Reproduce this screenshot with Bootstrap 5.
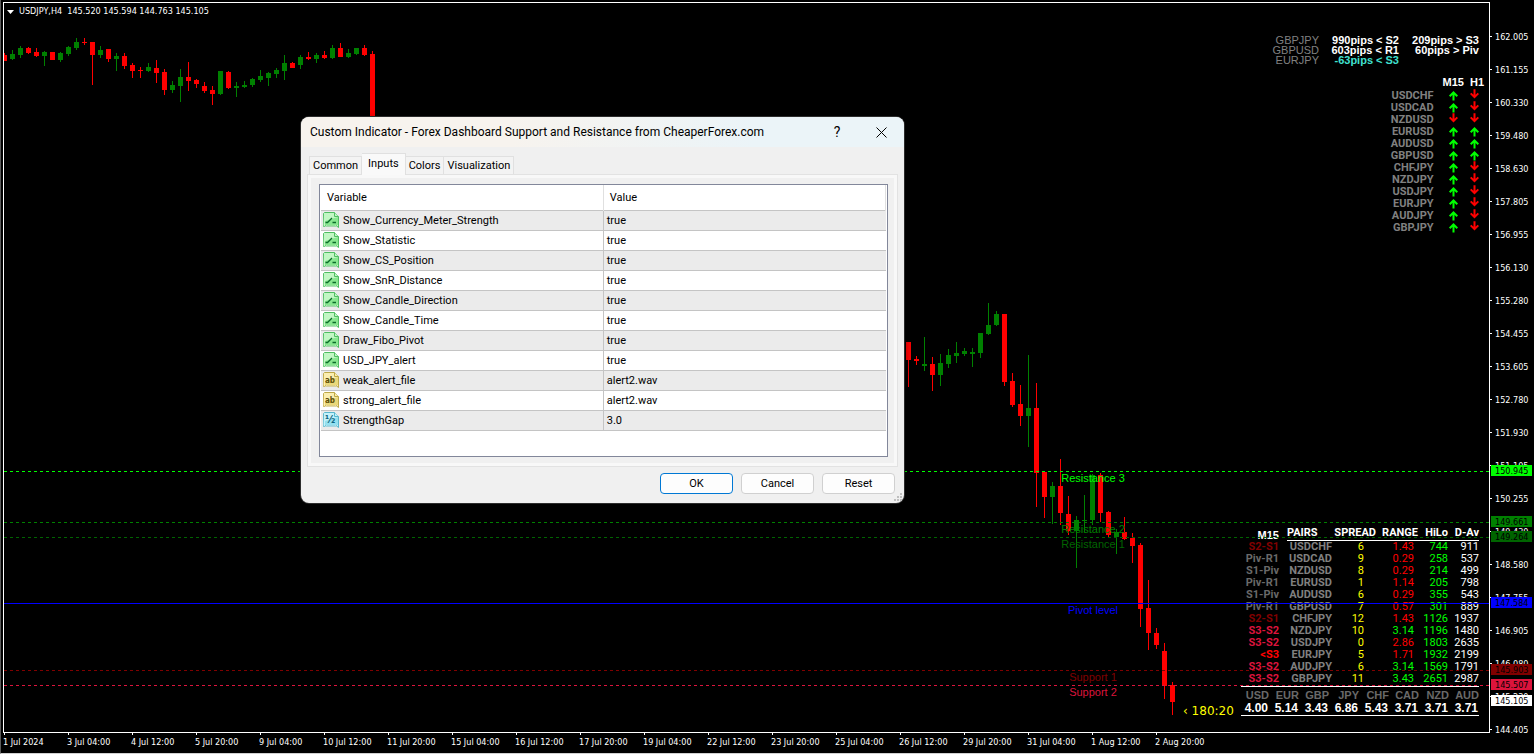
<!DOCTYPE html>
<html lang="en">
<head>
<meta charset="utf-8">
<meta name="viewport" content="width=device-width, initial-scale=1">
<title>USDJPY,H4</title>
<link href="https://cdn.jsdelivr.net/npm/bootstrap@5.3.0/dist/css/bootstrap.min.css" rel="stylesheet">
<style>
  :root { --ui: Roboto, "Liberation Sans", sans-serif; --scale: "DejaVu Sans Condensed", "DejaVu Sans", sans-serif; --arial: "Liberation Sans", Arial, sans-serif; }
  body { background: #000; color: #fff; font: 11px/12px var(--arial); border-left: 1px solid #5a5a5a; border-bottom: 1px solid #d0d0d0; }
  .plot { margin: 2px 0 0 2px; border: 1px solid #fff; min-width: 0; }
  .symbol-line { left: 3px; top: 2px; gap: 5px; font: 9px/13px var(--scale); }
  .scale-font { font: 9px/12px var(--scale); }
  table { border-collapse: collapse; }
  table td, table th { padding: 0; white-space: nowrap; }

  /* price and time scales */
  .price-axis { width: 44px; padding-top: 20px; }
  .price-row { height: 33px; }
  .price-row::before { content: ""; width: 2px; height: 1px; background: #fff; margin-right: 3px; }
  .price-tag { left: 1px; right: 2px; height: 11px; padding-left: 4px; color: #000; }
  .time-axis { height: 20px; padding-left: 3px; }
  .time-cell { flex: 0 0 64px; white-space: nowrap; }
  .time-cell::before { content: ""; display: block; width: 1px; height: 2px; margin-bottom: 1px; background: #fff; }
  .time-cell span { margin-left: -1px; }

  /* on-chart tables */
  .snr { right: 10px; top: 32px; line-height: 10px; color: #808080; }
  .snr td, .snr th { width: 80px; height: 10px; text-align: right; font-weight: 400; }
  .snr td { font-weight: 700; color: #fff; }
  .snr .near td { color: #40e0d0; }
  .trend { right: 5px; top: 73px; }
  .trend th, .trend td { height: 12px; width: 20px; text-align: center; }
  .trend thead th { height: 14px; vertical-align: top; }
  .trend tbody th { width: 60px; padding-right: 9px; text-align: right; font: bold 11px/12px var(--ui); color: #808080; }
  .trend svg { display: block; margin: 0 auto; overflow: visible; }
  .stats { right: 10px; bottom: 16px; width: 238px; }
  .pairs { table-layout: fixed; width: 100%; font-family: var(--ui); }
  .pairs td, .pairs th { height: 12px; text-align: right; }
  .pairs thead th { height: 14px; line-height: 11px; vertical-align: top; border-bottom: 1px solid #fff; }
  .pairs thead th:first-child { border: 0; font-family: var(--arial); vertical-align: bottom; }
  .pairs thead th:nth-child(2) { text-align: left; }
  .pairs th:first-child, .pairs td:first-child { padding-right: 8px; font-weight: 700; }
  .pairs tbody th { color: #808080; }
  .pairs td:nth-child(3) { padding-right: 12px; color: #ff0; }
  .pairs td:nth-child(4) { padding-right: 4px; }
  .up { color: #0f0; } .down { color: #f00; } .muted-zone { color: #696969; } .s1zone { color: #800000; } .s2zone { color: #dc143c; }
  .meter { table-layout: fixed; width: 100%; margin-top: 1px; border: solid #fff; border-width: 1px 0; font-weight: 700; }
  .meter th { height: 15px; color: #696969; text-align: right; }
  .meter th:first-child { width: 28px; }
  .meter td { height: 14px; padding-right: 1px; text-align: right; font-size: 12px; line-height: 12px; vertical-align: top; }

  /* indicator window */
  .dialog { left: 301px; top: 117px; width: 603px; max-width: calc(100vw - 302px); border-radius: 8px; background: #f0f0f0; color: #000; font: 11px/14px var(--ui); box-shadow: 0 0 0 1px #2c2c2c, 0 3px 10px rgba(0,0,0,.5); overflow: hidden; }
  .titlebar { height: 30px; padding: 0 9px; font-size: 12px; background: linear-gradient(90deg, #f7f3ee 35%, #ebf4f8 75%); }
  .titlebar h1 { font: inherit; margin: 0; }
  .titlebar button { width: 28px; height: 28px; padding: 0; border: 0; background: none; color: #000; font: 14px/28px var(--ui); }
  .titlebar svg { display: block; margin: 0 auto; }
  .tab-strip { padding: 6px 8px 0; border: 0; align-items: flex-end; }
  .tab-strip .nav-link { margin: 0; height: 18px; padding: 2px 3px 1px; border: 1px solid #e0e0e0; border-bottom: 0; border-left-width: 0; border-radius: 0; background: #f3f3f3; color: #000; }
  .tab-strip li:first-child .nav-link { border-left-width: 1px; }
  .tab-strip .nav-link.active { height: 22px; padding: 3px 6px 0; background: #f9f9f9; border-color: #e0e0e0; color: #000; margin-bottom: -1px; position: relative; }
  .tab-panel { margin: 0 6px; border: 1px solid #e2e2e2; background: #f0f0f0; padding: 9px; outline: 3px solid #f8f8f8; outline-offset: -4px; }
  .list-view { border: 1px solid #82879a; background: #fff; min-height: 273px; margin: 0 0 0 2px; padding: 0 1px; }
  .inputs { width: 100%; table-layout: fixed; }
  .inputs thead th { height: 25px; font-weight: 400; padding: 2px 0 0 6px; border-right: 1px solid #e0e0e0; }
  .inputs tbody td { height: 20px; padding-left: 3px; line-height: 16px; border: 1px solid #c4c4c4; border-width: 1px 0; }
  .inputs tbody td:first-child { padding-left: 2px; border-right-width: 1px; }
  .inputs tbody tr:nth-child(odd) td { background: #ebebeb; }
  .inputs tbody span { padding-top: 1px; }
  .actions { gap: 8px; padding: 6px 9px 9px; }
  .actions .btn { width: 73px; height: 21px; padding: 0; font: 11px/20px var(--ui); color: #000; background: #fdfdfd; border: 1px solid #d0d0d0; border-radius: 4px; }
  .actions .btn.default { border-color: #0078d4; }
  .grip { right: 2px; bottom: 2px; }
</style>
</head>
<body class="d-flex flex-column vh-100 overflow-hidden">

<main class="d-flex flex-fill" style="min-height:0">
  <section class="plot position-relative flex-fill overflow-hidden" aria-label="USDJPY H4 chart">
    <svg id="candles" class="position-absolute top-0 start-0 w-100 h-100" shape-rendering="crispEdges" aria-hidden="true"></svg>

    <div class="symbol-line position-absolute d-flex align-items-center">
      <svg width="7" height="4" viewBox="0 0 7 4"><path d="M0 0h7L3.500 4z" fill="#fff"/></svg>
      <span>USDJPY,H4&nbsp; 145.520 145.594 144.763 145.105</span>
    </div>

    <table class="snr position-absolute">
      <tr><th scope="row">GBPJPY</th><td>990pips &lt; S2</td><td>209pips &gt; S3</td></tr>
      <tr><th scope="row">GBPUSD</th><td>603pips &lt; R1</td><td>60pips &gt; Piv</td></tr>
      <tr class="near"><th scope="row">EURJPY</th><td>-63pips &lt; S3</td><td></td></tr>
    </table>

    <table class="trend position-absolute">
      <thead><tr><td></td><th>M15</th><th class="text-end">H1</th></tr></thead>
      <tbody id="trend"></tbody>
    </table>

    <div class="stats position-absolute">
      <table class="pairs">
        <colgroup><col style="width:46px"><col style="width:45px"><col style="width:44px"><col style="width:42px"><col style="width:30px"><col style="width:31px"></colgroup>
        <thead><tr><th>M15</th><th>PAIRS</th><th>SPREAD</th><th>RANGE</th><th>HiLo</th><th>D-Av</th></tr></thead>
        <tbody id="pairs"></tbody>
      </table>
      <table class="meter">
        <tr><th>USD</th><th>EUR</th><th>GBP</th><th>JPY</th><th>CHF</th><th>CAD</th><th>NZD</th><th>AUD</th></tr>
        <tr><td>4.00</td><td>5.14</td><td>3.43</td><td>6.86</td><td>5.43</td><td>3.71</td><td>3.71</td><td>3.71</td></tr>
      </table>
    </div>

    <svg id="levels" class="position-absolute top-0 start-0 w-100 h-100 pe-none"></svg>
  </section>

  <aside class="price-axis position-relative scale-font" id="prices" aria-label="Price scale"></aside>
</main>
<footer class="time-axis d-flex scale-font" id="times"></footer>

<div class="dialog position-absolute" role="dialog" aria-labelledby="dlgTitle">
  <div class="titlebar d-flex align-items-center">
    <h1 id="dlgTitle" class="me-auto">Custom Indicator - Forex Dashboard Support and Resistance from CheaperForex.com</h1>
    <button type="button" aria-label="Help" class="me-3">?</button>
    <button type="button" aria-label="Close"><svg width="11" height="11" viewBox="0 0 11 11"><path d="M.5.5l10 10M10.500.500l-10 10" stroke="#000" fill="none"/></svg></button>
  </div>
  <ul class="tab-strip nav nav-tabs">
    <li><a class="nav-link" href="#">Common</a></li>
    <li><a class="nav-link active" href="#" aria-current="page">Inputs</a></li>
    <li><a class="nav-link" href="#">Colors</a></li>
    <li><a class="nav-link" href="#">Visualization</a></li>
  </ul>
  <div class="tab-panel">
    <div class="list-view">
      <table class="inputs">
        <colgroup><col><col style="width:50%"></colgroup>
        <thead><tr><th>Variable</th><th>Value</th></tr></thead>
        <tbody id="inputs"></tbody>
      </table>
    </div>
  </div>
  <div class="actions d-flex justify-content-end">
    <button type="button" class="btn default">OK</button>
    <button type="button" class="btn">Cancel</button>
    <button type="button" class="btn">Reset</button>
  </div>
  <svg class="grip position-absolute" width="8" height="8" viewBox="0 0 8 8" fill="#bfbfbf"><path d="M6 0h2v2H6zM3 3h2v2H3zM6 3h2v2H6zM0 6h2v2H0zM3 6h2v2H3zM6 6h2v2H6z"/></svg>
</div>

<script src="https://cdn.jsdelivr.net/npm/bootstrap@5.3.0/dist/js/bootstrap.bundle.min.js"></script>
<script>
const $ = id => document.getElementById(id);

// candles: high, body top, body bottom, low, colour; one run per visible stretch of bars
const runs = [
  [0, `53 55 61 61 r|50 54 59 60 g|46 48 55 58 g|47 48 53 54 r|48 52 56 57 r|51 52 56 66 g|52 52 60 60 r|52 53 60 62 g|46 47 54 56 g|38 42 48 50 g|38 42 43 45 r|42 42 55 85 r|46 50 55 58 g|49 49 59 62 r|53 56 59 71 g|53 56 66 69 r|63 65 71 78 r|67 70 71 78 r|63 67 71 72 g|60 68 73 83 r|69 72 90 95 r|81 85 90 93 g|69 77 86 102 g|62 77 81 91 r|79 80 84 88 r|82 86 91 93 r|86 90 94 105 r|71 71 94 95 g|71 72 88 89 r|82 86 88 97 g|81 85 87 88 g|78 79 85 87 g|70 76 80 82 g|72 73 78 86 g|68 70 74 78 g|55 63 71 80 g|62 63 68 68 r|55 57 65 69 g|52 57 59 60 r|53 55 59 63 g|51 55 58 59 r|45 48 58 59 g|43 48 57 57 r|49 53 57 58 g|48 48 54 55 g|45 48 55 56 r|51 54 140 140 r`],
  [113, `342 342 360 387 r|356 359 361 365 r|337 364 366 371 g|357 364 375 391 r|354 363 375 386 g|349 355 364 368 g|342 353 356 363 g|348 351 354 356 g|348 352 354 367 g|333 333 353 358 g|303 325 334 335 g|311 314 325 326 g|314 314 382 386 r|373 381 405 407 r|385 404 416 426 r|355 408 416 447 g|383 408 473 507 r|472 472 497 518 r|482 486 497 524 g|459 486 513 525 r|496 514 531 535 r|516 520 531 568 g|495 520 521 532 g|474 475 520 525 g|473 475 513 522 r|511 512 535 537 r|529 532 537 554 g|517 532 539 540 r|533 538 546 563 r|543 545 609 627 r|580 608 633 650 r|628 633 645 649 r|643 651 686 699 r|682 685 702 715 r`]
];
const ORIGIN_X = 4, ORIGIN_Y = 3, STEP = 8;
let shapes = '';
for (const [first, text] of runs) text.split('|').forEach((bar, n) => {
  const [hi, top, bot, lo, c] = bar.split(' '), x = 2 + STEP * (first + n), fill = c === 'r' ? '#f00' : '#008000';
  shapes += `<rect x="${x + 2}" y="${hi}" width="1" height="${lo - hi}" fill="${fill}"/><rect x="${x}" y="${top}" width="5" height="${bot - top}" fill="${fill}"/>`;
});
$('candles').innerHTML = `<g transform="translate(${-ORIGIN_X} ${-ORIGIN_Y})">${shapes}</g>`;

// price scale
const prices = '162.005 161.155 160.330 159.480 158.630 157.805 156.955 156.130 155.280 154.455 153.605 152.780 151.930 151.105 150.255 149.430 148.580 147.755 146.905 146.080 145.230 144.405'.split(' ');
const yOf = p => Math.floor(36 + (162.005 - p) * (33 * 21) / (162.005 - 144.405));
const levels = [
  ['150.945', '#0f0', 'Resistance 3', '#0f0'], ['149.661', '#008000', 'Resistance 2', '#008000'], ['149.264', '#006400', 'Resistance 1', '#006400'],
  ['147.584', '#00f', 'Pivot level', '#00f'], ['145.903', '#800000', 'Support 1', '#800000'], ['145.507', '#dc143c', 'Support 2', '#dc143c'], ['145.105', '#fff']
];
$('prices').innerHTML = prices.map(p => `<div class="price-row d-flex align-items-center">${p}</div>`).join('') +
  levels.map(([p, c]) => `<div class="price-tag position-absolute" style="top:${yOf(p) - 6}px;background:${c}">${p}</div>`).join('');
$('levels').innerHTML = levels.filter(l => l[2]).map(([p, c, name, ink]) => {
  const y = yOf(p) - ORIGIN_Y;
  return `<line x1="0" x2="100%" y1="${y + .5}" y2="${y + .5}" stroke="${c}" ${c === '#00f' ? '' : 'stroke-dasharray="3 3"'} shape-rendering="crispEdges"/><text x="1089" y="${y + 11}" text-anchor="middle" fill="${ink}">${name}</text>`;
}).join('') + `<text x="1179" y="712" fill="#ff0" font-family="DejaVu Sans, sans-serif" font-size="12">‹ 180:20</text>`;

$('times').innerHTML = '1 Jul 2024,3 Jul 04:00,4 Jul 12:00,5 Jul 20:00,9 Jul 04:00,10 Jul 12:00,11 Jul 20:00,15 Jul 04:00,16 Jul 12:00,17 Jul 20:00,19 Jul 04:00,22 Jul 12:00,23 Jul 20:00,25 Jul 04:00,26 Jul 12:00,29 Jul 20:00,31 Jul 04:00,1 Aug 12:00,2 Aug 20:00'
  .split(',').map(t => `<div class="time-cell"><span>${t}</span></div>`).join('');

// candle direction per pair
const arrow = d => d === 'u'
  ? '<svg width="9" height="12" viewBox="0 0 9 12"><path d="M4.500 10.500V3M.7 6.300L4.500 2.500l3.800 3.800" fill="none" stroke="#0f0" stroke-width="2"/></svg>'
  : '<svg width="9" height="12" viewBox="0 0 9 12"><path d="M4.500-.8V7M.7 3.400l3.800 3.800 3.800-3.800" fill="none" stroke="#f00" stroke-width="2"/></svg>';
$('trend').innerHTML = 'USDCHF ud,USDCAD ud,NZDUSD dd,EURUSD uu,AUDUSD uu,GBPUSD uu,CHFJPY ud,NZDJPY ud,USDJPY ud,EURJPY ud,AUDJPY ud,GBPJPY ud'.split(',')
  .map(r => { const [p, d] = r.split(' '); return `<tr><th scope="row">${p}</th><td>${arrow(d[0])}</td><td>${arrow(d[1])}</td></tr>`; }).join('');

const zone = z => z === 'S2-S1' ? 's1zone' : z === 'S3-S2' ? 's2zone' : z === '&lt;S3' ? 'down' : 'muted-zone';
$('pairs').innerHTML = `S2-S1 USDCHF 6 1.43 744 911,Piv-R1 USDCAD 9 0.29 258 537,S1-Piv NZDUSD 8 0.29 214 499,Piv-R1 EURUSD 1 1.14 205 798,S1-Piv AUDUSD 6 0.29 355 543,Piv-R1 GBPUSD 7 0.57 301 889,S2-S1 CHFJPY 12 1.43 1126 1937,S3-S2 NZDJPY 10 3.14 1196 1480,S3-S2 USDJPY 0 2.86 1803 2635,&lt;S3 EURJPY 5 1.71 1932 2199,S3-S2 AUDJPY 6 3.14 1569 1791,S3-S2 GBPJPY 11 3.43 2651 2987`
  .split(',').map(r => { const [z, p, s, g, h, a] = r.split(' ');
    return `<tr><td class="${zone(z)}">${z}</td><th scope="row">${p}</th><td>${s}</td><td class="${g > 3 ? 'up' : 'down'}">${g}</td><td class="up">${h}</td><td>${a}</td></tr>`; }).join('');

// indicator inputs; the icon tells the type
const kinds = {
  bool: ['#c2f7c4', '#5fdc6c', '#4fbd62', '<path d="M2.500 10.500h2L9 6M9.500 10.500h3.500" stroke="#0b6b2a" stroke-width="1.300" fill="none"/>'],
  text: ['#fbeeb0', '#e0c956', '#bda848', '<text x="2" y="11" font-family="DejaVu Sans Condensed" font-weight="700" font-size="8" fill="#5e5008">ab</text>'],
  real: ['#c4f2fa', '#74d3e8', '#58b7cd', '<text x="2" y="11" font-family="DejaVu Sans Condensed" font-weight="700" font-size="11" fill="#0d6580">½</text>']
};
const icon = k => { const [a, b, line, mark] = kinds[k];
  return `<svg class="me-1 flex-shrink-0" width="16" height="16" viewBox="0 0 16 16" aria-hidden="true"><path d="M.5 1.500l1-1h10l4 4v11l-2.500-2-1 1-1-1-1 1-1-1-1 1-1-1-1 1-1-1-1 1-1-1-1.500 1-1.500-.5z" fill="${a}" stroke="${line}"/><path d="M2 9l13-4v8H2z" fill="${b}" opacity=".6"/><path d="M11.500.5v4h4" fill="${a}" stroke="${line}"/>${mark}</svg>`; };
$('inputs').innerHTML = [
  ['bool', 'Show_Currency_Meter_Strength', 'true'], ['bool', 'Show_Statistic', 'true'], ['bool', 'Show_CS_Position', 'true'], ['bool', 'Show_SnR_Distance', 'true'],
  ['bool', 'Show_Candle_Direction', 'true'], ['bool', 'Show_Candle_Time', 'true'], ['bool', 'Draw_Fibo_Pivot', 'true'], ['bool', 'USD_JPY_alert', 'true'],
  ['text', 'weak_alert_file', 'alert2.wav'], ['text', 'strong_alert_file', 'alert2.wav'], ['real', 'StrengthGap', '3.0']
].map(([k, n, v]) => `<tr><td><div class="d-flex">${icon(k)}<span>${n}</span></div></td><td><span class="d-block">${v}</span></td></tr>`).join('');
</script>
</body>
</html>
